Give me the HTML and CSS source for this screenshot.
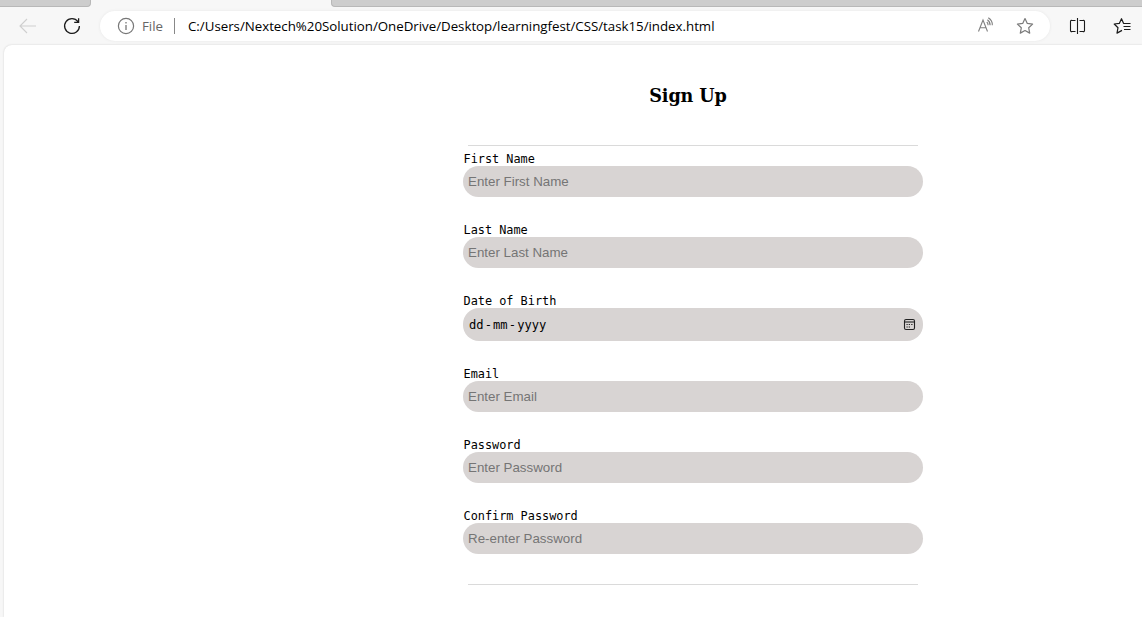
FILE: index.html
```html
<!DOCTYPE html>
<html lang="en">
<head>
<meta charset="utf-8">
<title>Sign Up</title>
<link rel="stylesheet" href="styles.css">
</head>
<body>
<div class="tabs"><div class="tab tab-left"></div><div class="tab-active"></div><div class="tab tab-right"></div></div>
<header class="toolbar">
  <svg class="back" width="18" height="16" viewBox="0 0 18 16" fill="none" stroke="#cfcfcf" stroke-width="1.1"><path d="M8 1 1 8l7 7M1 8h16"/></svg>
  <svg class="reload" width="18" height="18" viewBox="0 0 18 18" fill="none" stroke="#1b1b1b" stroke-width="1.3"><path d="M16.4 9A7.4 7.4 0 1 1 15 4.7M15.6 1.2v4.2h-4.4"/></svg>
  <div class="address">
    <svg class="info" width="18" height="18" viewBox="0 0 18 18" fill="none" stroke="#777" stroke-width="1.2"><circle cx="9" cy="9" r="7.6"/><path d="M9 8v5M9 5v1.5" stroke-width="1.3"/></svg>
    <span class="scheme">File</span>
    <span class="divider"></span>
    <span class="url">C:/Users/Nextech%20Solution/OneDrive/Desktop/learningfest/CSS/task15/index.html</span>
    <svg class="read" width="18" height="18" viewBox="0 0 18 18" fill="none" stroke="#808080" stroke-width="1.1"><path d="M2.500 14.500 7 3l4.500 11.500M4 10.800h6M10.800 5q1.400 1.300 1.300 3.200M11.400 2.700q2.900 2 2.700 5.500M12.300 .8q4.300 2.800 4 7.400"/></svg>
    <svg class="star" width="18" height="18" viewBox="0 0 18 18" fill="none" stroke="#7b7b7b" stroke-width="1.2" stroke-linejoin="round"><path d="m9 1.500 2.300 4.900 5.300.7-3.900 3.700 1 5.300L9 13.500l-4.700 2.600 1-5.300L1.400 7.100l5.300-.7z"/></svg>
  </div>
  <svg class="split" width="18" height="18" viewBox="0 0 18 18" fill="none" stroke="#1b1b1b" stroke-width="1.1"><path d="M6.500 3.500H3A1 1 0 0 0 1.500 4.500v9a1 1 0 0 0 1.500 1h3.500M10.500 3.500H14a1 1 0 0 1 1.500 1v9a1 1 0 0 1-1.500 1h-3.500M8.500 1v16"/></svg>
  <svg class="favorites" width="18" height="18" viewBox="0 0 18 18" fill="none" stroke="#1b1b1b" stroke-width="1.2" stroke-linejoin="round"><path d="M13 6.500 10.500 6.300 8.500 1.700 6.300 6.400 1.200 7l3.800 3.700-1 5.400 5-2.700M11.500 6.500h6M10.500 9.500h7M11 12.500h6.500"/></svg>
</header>
<main class="page">
  <form class="signup">
    <h1 class="title">Sign Up</h1>
    <div class="rule"></div>
    <div class="fields">
      <label class="field"><span class="label">First Name</span><input class="input" type="text" placeholder="Enter First Name"></label>
      <label class="field"><span class="label">Last Name</span><input class="input" type="text" placeholder="Enter Last Name"></label>
      <div class="field"><span class="label">Date of Birth</span>
        <div class="input date"><span class="part">dd</span><span class="dash">-</span><span class="part">mm</span><span class="dash">-</span><span class="part">yyyy</span>
          <svg class="calendar" width="13" height="13" viewBox="0 0 13 13" fill="none" stroke="#222" stroke-width="1.100"><rect x="1.500" y="1.500" width="10" height="10" rx="1.500"/><path d="M1.500 4h10"/><path d="M3.500 6.500h1.200M5.700 6.500h1.300M8.200 6.500h1.300M3.500 9h1.200M5.700 9h1.300"/></svg>
        </div></div>
      <label class="field"><span class="label">Email</span><input class="input" type="email" placeholder="Enter Email"></label>
      <label class="field"><span class="label">Password</span><input class="input" type="password" placeholder="Enter Password"></label>
      <label class="field"><span class="label">Confirm Password</span><input class="input" type="password" placeholder="Re-enter Password"></label>
    </div>
    <div class="rule"></div>
  </form>
</main>
</body>
</html>
```

FILE: styles.css
```css
* { box-sizing: border-box; }
body { margin: 0; height: 617px; overflow: hidden; background: #f7f7f7; display: flex; flex-direction: column; }
svg { display: block; flex: none; }
.tabs { display: flex; height: 7px; flex: none; }
.tab { background: #cdcdcd; border-bottom: 1px solid #b8b8b8; }
.tab-left { width: 91px; border-right: 1px solid #b8b8b8; border-radius: 0 0 4px 0; }
.tab-active { width: 240px; }
.tab-right { flex: 1; border-left: 1px solid #b8b8b8; border-radius: 0 0 0 4px; }
.toolbar { display: flex; align-items: center; height: 37px; flex: none; padding-left: 19px; font-family: "Open Sans", "Noto Sans", sans-serif; }
.reload { margin-left: 26px; }
.address { display: flex; align-items: center; width: 950px; height: 30px; margin: 1px 0 0 19px; padding-left: 17px; border-radius: 15px; background: #fff; box-shadow: 0 0 3px #e6e6e6; flex: none; }
.scheme { width: 22px; margin-left: 7px; font-size: 13.3px; color: #666; white-space: nowrap; }
.divider { width: 1px; height: 16px; margin: 0 13px 0 10px; background: #888; }
.url { width: 788px; font-size: 13.3px; letter-spacing: -0.015px; color: #000; white-space: nowrap; }
.star { margin-left: 22px; }
.split { margin-left: 19px; }
.favorites { margin-left: 26px; }
.page { flex: 1; margin-left: 4px; padding-left: 459px; background: #fff; border-radius: 8px 0 0 0; box-shadow: 0 0 2px #ccc; margin-top: 1px; }
.signup { width: 460px; }
.title { margin: 0; padding: 38px 10px 0 0; height: 100px; text-align: center; font: bold 17.6px/26px "DejaVu Serif", serif; letter-spacing: -0.1px; }
.rule { height: 1px; margin: 0 5px; background: #dadada; }
.fields { padding: 7px 0 3px; }
.field { display: block; margin-bottom: 27px; }
.label { display: block; height: 13px; padding-left: 0.5px; font: 11.87px/13px "DejaVu Sans Mono", monospace; color: #000; }
.input { display: block; width: 460px; height: 31px; padding: 0 5px; border: 0; border-radius: 16px; background: #d8d4d3; font: 13.33px "Liberation Sans", sans-serif; }
.input::placeholder { color: #757575; opacity: 1; }
.date { display: flex; align-items: center; height: 33px; padding: 0 7px 0 6px; font: 12.1px "DejaVu Sans Mono", monospace; }
.dash { width: 9.5px; text-align: center; }
.calendar { margin-left: auto; }
```
